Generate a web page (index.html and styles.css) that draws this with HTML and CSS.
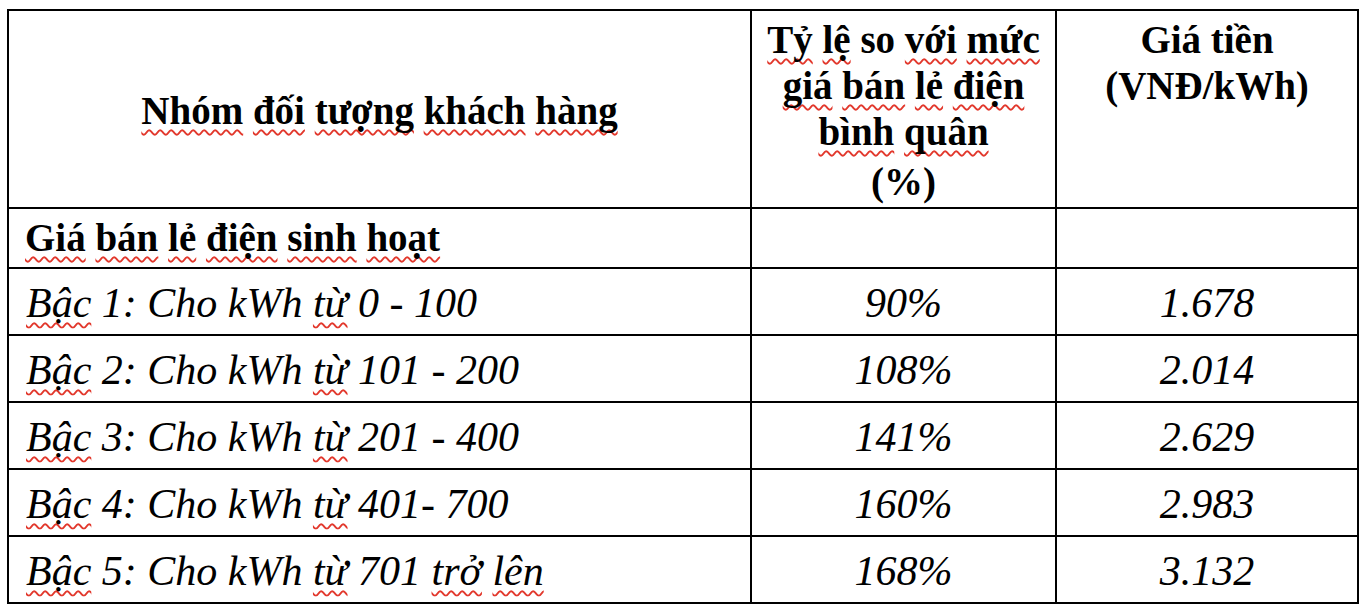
FILE: index.html
```html
<!DOCTYPE html>
<html lang="vi">
<head>
<meta charset="utf-8">
<title>Giá bán lẻ điện sinh hoạt</title>
<link rel="stylesheet" href="styles.css">
</head>
<body>
<div class="page">
<table class="tariff">
  <colgroup>
    <col class="c1">
    <col class="c2">
    <col class="c3">
  </colgroup>
  <thead>
    <tr class="head">
      <th class="h-group"><span class="sp">Nhóm</span> <span class="sp">đối</span> <span class="sp">tượng</span> <span class="sp">khách</span> <span class="sp">hàng</span></th>
      <th class="h-top"><span class="sp">Tỷ</span> <span class="sp">lệ</span> so <span class="sp">với</span> <span class="sp">mức</span> <span class="sp">giá</span> <span class="sp">bán</span> <span class="sp">lẻ</span> <span class="sp">điện</span> <span class="sp">bình</span> <span class="sp">quân</span><span class="pct">(%)</span></th>
      <th class="h-top">Giá tiền<br>(VNĐ/kWh)</th>
    </tr>
  </thead>
  <tbody>
    <tr class="section">
      <td class="label"><span class="sp">Giá</span> <span class="sp">bán</span> <span class="sp">lẻ</span> <span class="sp">điện</span> <span class="sp">sinh</span> <span class="sp">hoạt</span></td>
      <td class="blank"></td>
      <td class="blank"></td>
    </tr>
    <tr class="tier">
      <td class="name"><span class="sp">Bậc</span> 1: Cho kWh <span class="sp">từ</span> 0 - 100</td>
      <td class="num">90%</td>
      <td class="num">1.678</td>
    </tr>
    <tr class="tier">
      <td class="name"><span class="sp">Bậc</span> 2: Cho kWh <span class="sp">từ</span> 101 - 200</td>
      <td class="num">108%</td>
      <td class="num">2.014</td>
    </tr>
    <tr class="tier">
      <td class="name"><span class="sp">Bậc</span> 3: Cho kWh <span class="sp">từ</span> 201 - 400</td>
      <td class="num">141%</td>
      <td class="num">2.629</td>
    </tr>
    <tr class="tier">
      <td class="name"><span class="sp">Bậc</span> 4: Cho kWh <span class="sp">từ</span> 401- 700</td>
      <td class="num">160%</td>
      <td class="num">2.983</td>
    </tr>
    <tr class="tier">
      <td class="name"><span class="sp">Bậc</span> 5: Cho kWh <span class="sp">từ</span> 701 <span class="sp">trở</span> <span class="sp">lên</span></td>
      <td class="num">168%</td>
      <td class="num">3.132</td>
    </tr>
  </tbody>
</table>
</div>
</body>
</html>
```

FILE: styles.css
```css
html, body {
  margin: 0;
  padding: 0;
  background: #ffffff;
}

.page {
  padding: 9px 0 0 7px;
}

.tariff {
  border-collapse: collapse;
  table-layout: fixed;
  width: 1350px;
  font-family: "Liberation Serif", "Times New Roman", serif;
  color: #000000;
  border: 2px solid #000000;
}

.c1 { width: 743px; }
.c2 { width: 305px; }
.c3 { width: 302px; }

.tariff th,
.tariff td {
  border: 2px solid #000000;
  padding: 0;
}

.tariff th {
  font-weight: bold;
  font-size: 39px;
  line-height: 46px;
}

.head { height: 198px; }

.tariff .h-group {
  vertical-align: middle;
  text-align: center;
  padding: 4px 0 0;
}

.tariff .h-top {
  vertical-align: top;
  text-align: center;
  padding: 6px 10px 0;
}

.pct {
  display: block;
  margin-top: 4px;
}

.section { height: 60px; }

.tariff .label {
  font-weight: bold;
  font-size: 39px;
  line-height: 46px;
  padding: 0 0 0 16px;
  vertical-align: middle;
  white-space: nowrap;
}

.tier { height: 67px; }

.tariff .name,
.tariff .num {
  font-style: italic;
  font-size: 42px;
  line-height: 46px;
  vertical-align: middle;
  padding-top: 2px;
}

.tariff .name {
  padding-left: 17px;
  white-space: nowrap;
}

.tariff .num {
  text-align: center;
}

.sp {
  text-decoration-line: underline;
  text-decoration-style: wavy;
  text-decoration-color: #e2382c;
  text-decoration-thickness: 1.8px;
  text-underline-offset: 5px;
  text-decoration-skip-ink: none;
}
```
